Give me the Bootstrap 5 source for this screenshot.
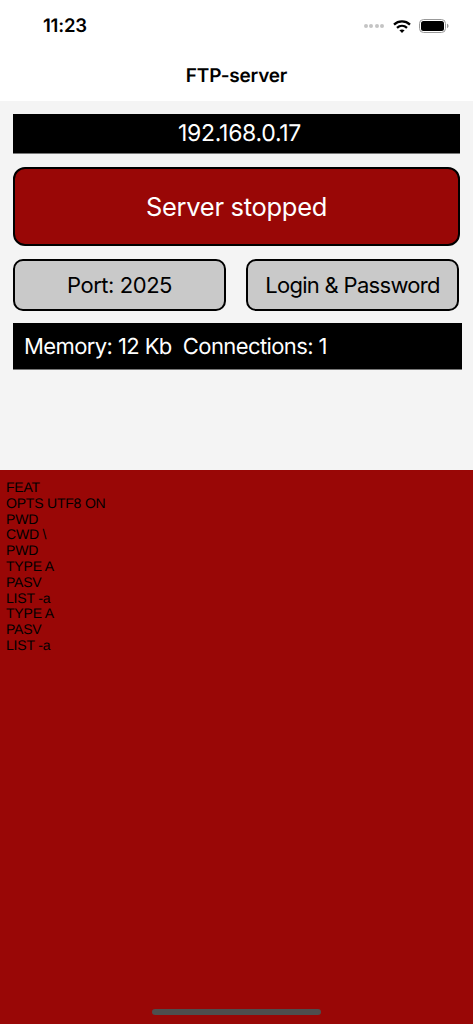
<!DOCTYPE html>
<html lang="en">
<head>
<meta charset="utf-8">
<meta name="viewport" content="width=device-width, initial-scale=1">
<title>FTP-server</title>
<link rel="stylesheet" href="https://cdn.jsdelivr.net/npm/bootstrap@5.3.0/dist/css/bootstrap.min.css">
<style>
html,body{height:100%;overflow:hidden}
body{background:#f4f4f4;font-family:Inter,"Liberation Sans",sans-serif;color:#000;text-rendering:geometricPrecision}
.app-shell{width:473px;height:1024px}
.top-head{height:101px;background:#fff;flex:none}
.status-row{height:52px;padding:0 24px 0 43px}
.clock{font-size:18.5px;font-weight:600;letter-spacing:-.2px;line-height:1}
.title-row{height:49px;font-size:19px;font-weight:600;letter-spacing:-.2px}
.dots{gap:1.5px;margin-right:9px}
.dots i{display:block;width:4px;height:4px;border-radius:50%;background:#c4c4c4}
.controls{height:369px;padding:13px 11px 0 13px;flex:none}
.ip-bar{height:40px;width:447px;padding-left:6px;background:#000;color:#fff;font-size:23px;letter-spacing:-.3px;border-bottom:1px solid #777}
.stop-btn{height:79px;width:447px;margin-top:13px;padding:1px 0 0;background:#990706;color:#fff;font-size:25.5px;letter-spacing:-.3px;border:2px solid #000;border-radius:12px}
.btn-row{margin-top:13px;gap:20px}
.grey-btn{height:52px;width:213px;background:#c9c9c9;color:#000;font-size:22px;letter-spacing:-.45px;border:2px solid #000;border-radius:10px;padding:0;white-space:nowrap}
.grey-tight{letter-spacing:-.7px}
.stat-bar{height:47px;width:449px;margin-top:12px;padding:3px 0 0 11px;background:#000;color:#fff;font-size:22px;letter-spacing:-.6px;white-space:pre;border-bottom:1px solid #777}
.log-pane{height:554px;background:#990706;padding:10px 6px 0;font-family:"Liberation Sans",Arial,sans-serif;font-size:14px;line-height:15.8px;letter-spacing:-.2px;color:#000;flex:none}
.home-bar{left:152px;bottom:9px;width:169px;height:6px;border-radius:3px;background:#4e4e4e}
</style>
</head>
<body>
<div class="app-shell d-flex flex-column position-relative">
  <header class="top-head d-flex flex-column">
    <div class="status-row d-flex align-items-center justify-content-between">
      <span class="clock">11:23</span>
      <span class="d-flex align-items-center">
        <span class="dots d-flex"><i></i><i></i><i></i><i></i></span>
        <svg width="18" height="13" viewBox="0 0 18 13" fill="none" stroke="#000" stroke-width="2.3" aria-hidden="true"><path d="M1 4.6C5.5.4 12.5.4 17 4.6"/><path d="M4 7.8c2.9-2.6 7.1-2.6 10 0"/><path d="M9 13 6.4 10.3c1.5-1.2 3.7-1.2 5.2 0Z" fill="#000" stroke="none"/></svg>
        <svg class="ms-2" width="30" height="14" viewBox="0 0 30 14" aria-hidden="true"><rect x=".5" y=".5" width="26" height="13" rx="4" fill="none" stroke="#999"/><rect x="2" y="2" width="23" height="10" rx="2.5" fill="#000"/><path d="M28 4.8c1 .3 1.5 1.2 1.5 2.2s-.5 1.9-1.5 2.2Z" fill="#999"/></svg>
      </span>
    </div>
    <div class="title-row d-flex align-items-center justify-content-center">FTP-server</div>
  </header>
  <main class="controls">
    <div class="ip-bar d-flex align-items-center justify-content-center">192.168.0.17</div>
    <button type="button" class="stop-btn btn d-block">Server stopped</button>
    <div class="btn-row d-flex">
      <button type="button" class="grey-btn btn">Port: 2025</button>
      <button type="button" class="grey-btn grey-tight btn">Login &amp; Password</button>
    </div>
    <div class="stat-bar d-flex align-items-center">Memory: 12 Kb  Connections: 1</div>
  </main>
  <section class="log-pane">
    <div>FEAT</div>
    <div>OPTS UTF8 ON</div>
    <div>PWD</div>
    <div>CWD \</div>
    <div>PWD</div>
    <div>TYPE A</div>
    <div>PASV</div>
    <div>LIST -a</div>
    <div>TYPE A</div>
    <div>PASV</div>
    <div>LIST -a</div>
  </section>
  <div class="home-bar position-absolute"></div>
</div>
<script src="https://cdn.jsdelivr.net/npm/bootstrap@5.3.0/dist/js/bootstrap.bundle.min.js"></script>
</body>
</html>
